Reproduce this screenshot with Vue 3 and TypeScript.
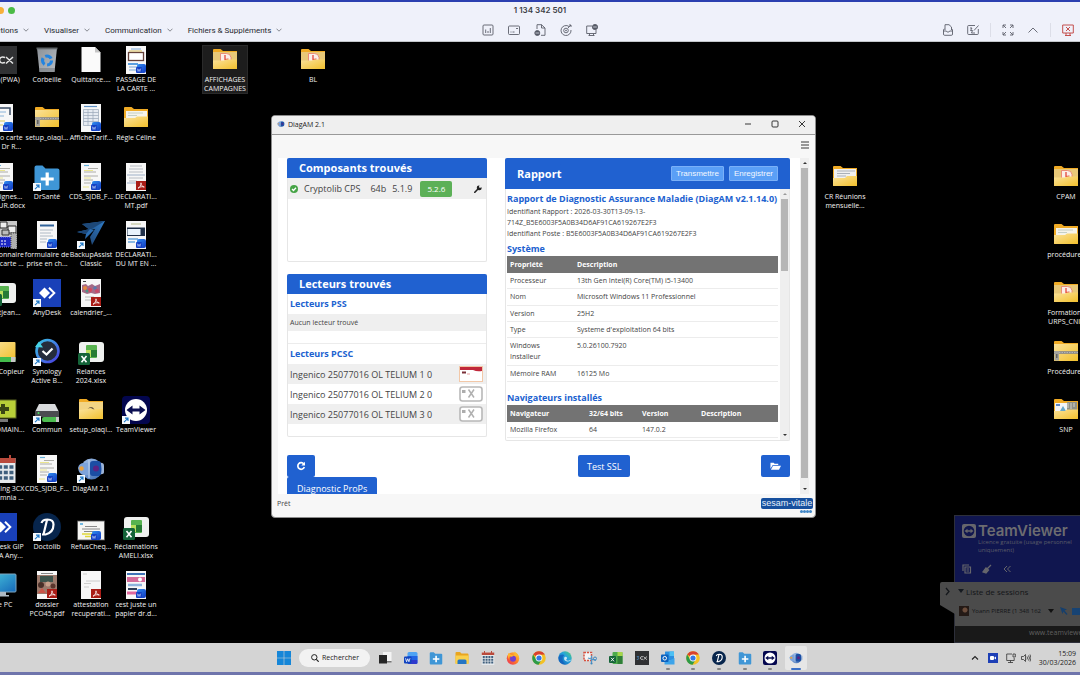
<script setup lang="ts">
interface DesktopItem {
  x: number
  y: number
  icon: string
  lines: string[]
  badge?: 'word' | 'pdf' | 'excel'
  shortcut?: boolean
  selected?: boolean
}

interface TaskIcon {
  icon: string
  name: string
  running?: boolean
  active?: boolean
}

const menus = ['Actions', 'Visualiser', 'Communication', 'Fichiers & Suppléments']

const items: DesktopItem[] = [
  { x: 3, y: 4, icon: 'cx', lines: ['3CX (PWA)'] },
  { x: 47, y: 4, icon: 'bin', lines: ['Corbeille'] },
  { x: 91, y: 4, icon: 'blank', lines: ['Quittance....'] },
  { x: 136, y: 4, icon: 'docframe', badge: 'word', lines: ['PASSAGE DE', 'LA CARTE ...'] },
  { x: 225, y: 4, icon: 'folderpdf', selected: true, lines: ['AFFICHAGES', 'CAMPAGNES'] },
  { x: 313, y: 4, icon: 'folderpdf', lines: ['BL'] },

  { x: 3, y: 62, icon: 'docside', badge: 'word', lines: ['Mémo carte', 'avec Dr R...'] },
  { x: 47, y: 62, icon: 'folderzip', lines: ['setup_olaqi...'] },
  { x: 91, y: 62, icon: 'doctable', badge: 'word', lines: ['AfficheTarif...'] },
  { x: 136, y: 62, icon: 'folderpaper', lines: ['Régie Céline'] },

  { x: 3, y: 121, icon: 'doctext', badge: 'word', lines: ['Consignes...', 'RETOUR.docx'] },
  { x: 47, y: 121, icon: 'sante', shortcut: true, lines: ['DrSanté'] },
  { x: 91, y: 121, icon: 'doctext', badge: 'word', lines: ['CDS_SJDB_F...'] },
  { x: 136, y: 121, icon: 'docform', badge: 'pdf', lines: ['DECLARATI...', 'MT.pdf'] },
  { x: 845, y: 121, icon: 'folderlines', lines: ['CR Réunions', 'mensuelle...'] },
  { x: 1066, y: 121, icon: 'folderpdf', lines: ['CPAM'] },

  { x: 3, y: 179, icon: 'cards', lines: ['Gestionnaire', 'de la carte ...'] },
  { x: 47, y: 179, icon: 'doclist', badge: 'word', lines: ['formulaire de', 'prise en ch...'] },
  { x: 91, y: 179, icon: 'backup', shortcut: true, lines: ['BackupAssist', 'Classic'] },
  { x: 136, y: 179, icon: 'docblue', badge: 'word', lines: ['DECLARATI...', 'DU MT EN ...'] },
  { x: 1066, y: 179, icon: 'folderpaper', lines: ['procédures'] },

  { x: 3, y: 237, icon: 'sheet', badge: 'excel', lines: ['CDStJean...'] },
  { x: 47, y: 237, icon: 'anydesk', shortcut: true, lines: ['AnyDesk'] },
  { x: 91, y: 237, icon: 'docphoto', badge: 'pdf', lines: ['calendrier_...'] },
  { x: 1066, y: 237, icon: 'folderpdf', lines: ['Formations', 'URPS_CNIL'] },

  { x: 3, y: 296, icon: 'netfolder', lines: ['Scan Copieur'] },
  { x: 47, y: 296, icon: 'synology', shortcut: true, lines: ['Synology', 'Active B...'] },
  { x: 91, y: 296, icon: 'sheet', badge: 'excel', lines: ['Relances', '2024.xlsx'] },
  { x: 1066, y: 296, icon: 'folderzip', lines: ['Procédures'] },

  { x: 3, y: 354, icon: 'greenscreen', lines: ['Dr ROMAIN...'] },
  { x: 47, y: 354, icon: 'drive', shortcut: true, lines: ['Commun'] },
  { x: 91, y: 354, icon: 'folderdoc', lines: ['setup_olaqi...'] },
  { x: 136, y: 354, icon: 'teamviewer', shortcut: true, lines: ['TeamViewer'] },
  { x: 1066, y: 354, icon: 'folderpics', lines: ['SNP'] },

  { x: 3, y: 413, icon: 'calendar', lines: ['Planning 3CX', 'de Lemnia ...'] },
  { x: 47, y: 413, icon: 'doctext', badge: 'word', lines: ['CDS_SJDB_F...'] },
  { x: 91, y: 413, icon: 'diagam', shortcut: true, lines: ['DiagAM 2.1'] },

  { x: 3, y: 471, icon: 'anydesk', lines: ['AnyDesk GIP', 'CDMA Any...'] },
  { x: 47, y: 471, icon: 'doctolib', shortcut: true, lines: ['Doctolib'] },
  { x: 91, y: 471, icon: 'docwide', badge: 'word', lines: ['RefusCheq...'] },
  { x: 136, y: 471, icon: 'sheet', badge: 'excel', lines: ['Réclamations', 'AMELI.xlsx'] },

  { x: 3, y: 529, icon: 'pc', lines: ['Ce PC'] },
  { x: 47, y: 529, icon: 'docclass', badge: 'pdf', lines: ['dossier', 'PCO45.pdf'] },
  { x: 91, y: 529, icon: 'docletter', badge: 'pdf', lines: ['attestation', 'recuperati...'] },
  { x: 136, y: 529, icon: 'docposter', badge: 'word', lines: ['cest juste un', 'papier dr.d...'] },
]

const readers = [
  { name: 'Ingenico 25077016 OL TELIUM 1 0', card: true },
  { name: 'Ingenico 25077016 OL TELIUM 2 0', card: false },
  { name: 'Ingenico 25077016 OL TELIUM 3 0', card: false },
]

const systemRows = [
  ['Processeur', '13th Gen Intel(R) Core(TM) i5-13400'],
  ['Nom', 'Microsoft Windows 11 Professionnel'],
  ['Version', '25H2'],
  ['Type', "Systeme d'exploitation 64 bits"],
  ['Windows Installeur', '5.0.26100.7920'],
  ['Mémoire RAM', '16125 Mo'],
]

const tasks: TaskIcon[] = [
  { icon: 'taskview', name: 'Vue des tâches' },
  { icon: 'word', name: 'Word' },
  { icon: 'sante', name: 'DrSanté' },
  { icon: 'explorer', name: 'Explorateur' },
  { icon: 'calendar', name: 'Planning' },
  { icon: 'firefox', name: 'Firefox' },
  { icon: 'chrome', name: 'Chrome' },
  { icon: 'edge', name: 'Edge' },
  { icon: 'snip', name: 'Capture' },
  { icon: 'excel', name: 'Excel' },
  { icon: 'cx', name: '3CX' },
  { icon: 'outlook', name: 'Outlook', running: true },
  { icon: 'chrome', name: 'Chrome 2', running: true },
  { icon: 'doctolib', name: 'Doctolib', running: true },
  { icon: 'sante', name: 'DrSanté 2', running: true },
  { icon: 'teamviewer', name: 'TeamViewer', running: true },
  { icon: 'diagam', name: 'DiagAM', active: true },
]
</script>

<template>
  <div class="screen">
    <svg class="defs" aria-hidden="true">
      <defs>
        <linearGradient id="gFolder" x1="0" y1="0" x2="1" y2="1">
          <stop offset="0" stop-color="#fbe29a" /><stop offset="1" stop-color="#f2c02c" />
        </linearGradient>
        <linearGradient id="gBin" x1="0" y1="0" x2="1" y2="1">
          <stop offset="0" stop-color="#8b9198" /><stop offset="1" stop-color="#b9bec3" />
        </linearGradient>
        <linearGradient id="gBackup" x1="0" y1="1" x2="1" y2="0">
          <stop offset="0" stop-color="#1c3c66" /><stop offset="1" stop-color="#2f7cc8" />
        </linearGradient>
        <linearGradient id="gRing" x1="0" y1="0" x2="1" y2="1">
          <stop offset="0" stop-color="#39c5e8" /><stop offset="1" stop-color="#4a3be0" />
        </linearGradient>
        <linearGradient id="gDiag" x1="0" y1="0" x2="1" y2="1">
          <stop offset="0" stop-color="#a9c4ea" /><stop offset="1" stop-color="#3567b0" />
        </linearGradient>
        <linearGradient id="gPc" x1="0" y1="0" x2="1" y2="1">
          <stop offset="0" stop-color="#47c3dc" /><stop offset="1" stop-color="#1668b8" />
        </linearGradient>
        <linearGradient id="gWord" x1="0" y1="0" x2="1" y2="1">
          <stop offset="0" stop-color="#2f8df0" /><stop offset="1" stop-color="#1238c0" />
        </linearGradient>
        <linearGradient id="gFire" x1="1" y1="0" x2="0" y2="1">
          <stop offset="0" stop-color="#ffd23a" /><stop offset="0.5" stop-color="#ff7a2a" /><stop offset="1" stop-color="#e8285c" />
        </linearGradient>
        <linearGradient id="gEdge" x1="0" y1="1" x2="1" y2="0">
          <stop offset="0" stop-color="#0c5ab8" /><stop offset="0.6" stop-color="#27a5dc" /><stop offset="1" stop-color="#54d06a" />
        </linearGradient>
        <symbol id="word-badge" viewBox="0 0 10 10">
          <rect x="1" y="0" width="9" height="9" rx="2" fill="url(#gWord)" />
          <rect y="3" width="6" height="6" rx="1" fill="#1440c4" />
          <path d="M1.2 4.5l.9 3 .9-2.400.9 2.400.9-3" fill="none" stroke="#dfe8ff" stroke-width=".5" />
        </symbol>
        <symbol id="pdf-badge" viewBox="0 0 10 10">
          <rect width="10" height="9" fill="#a91d17" />
          <path d="M2 7.2c2-.6 3-3.200 3-5.400c0 2.500 1.400 4 3.300 4.200c-2-.6-4.500-.3-6.300 1.200z" fill="none" stroke="#fff" stroke-width=".8" />
        </symbol>
        <symbol id="excel-badge" viewBox="0 0 12 12">
          <rect width="12" height="12" rx="1.500" fill="#146338" />
          <path d="M3.500 3l5 6.200M8.500 3l-5 6.200" stroke="#fff" stroke-width="1.600" />
        </symbol>
        <symbol id="link-badge" viewBox="0 0 8 8">
          <rect width="8" height="8" fill="#f5f9fd" />
          <path d="M2 6.200l3.600-3.600M3 2.100h3v3" fill="none" stroke="#1c78c8" stroke-width="1.100" />
        </symbol>
        <symbol id="page" viewBox="0 0 28 28"><path d="M4 0h20v28H4z" fill="#f7f7f7" /></symbol>
        <symbol id="folderback" viewBox="0 0 28 28">
          <path d="M2 4q0-1 1-1h6.500l2.500 2h14v18H2z" fill="#f0ab25" />
        </symbol>

        <symbol id="cx" viewBox="0 0 28 28">
          <rect width="28" height="28" fill="#303133" />
          <path d="M3.500 11h4l-2 3q2 .2 2 1.500q0 1.700-4 1.500" fill="none" stroke="#4d92cf" stroke-width="1.300" />
          <path d="M16 11.500q-5-1.500-5.500 2.500q.5 4 5.500 2.500M17 11l7 6.500M24 11l-7 6.500" fill="none" stroke="#e6e6e6" stroke-width="1.500" />
        </symbol>
        <symbol id="bin" viewBox="0 0 28 28">
          <path d="M4 2h20l-2.500 24h-15z" fill="url(#gBin)" /><path d="M3.500 1.500h21v1.800h-21z" fill="#5f6468" />
          <path d="M6 22h16l-.5 4h-15z" fill="#747a80" opacity=".6" />
          <circle cx="14" cy="14.500" r="4.500" fill="none" stroke="#2384e0" stroke-width="3.200" stroke-dasharray="6.800 2.600" />
        </symbol>
        <symbol id="blank" viewBox="0 0 28 28">
          <path d="M4.500 1h13.500l5.500 5.500V26h-19z" fill="#fafafa" /><path d="M18 1v5.500h5.500z" fill="#c5c5c5" />
        </symbol>
        <symbol id="docframe" viewBox="0 0 28 28">
          <use href="#page" /><path d="M9 3h10M7 21h10M7 24h8" stroke="#7aa7d8" /><rect x="6.500" y="6.500" width="15" height="8" fill="#fff" stroke="#64413a" stroke-width="1.300" /><path d="M6 18h10" stroke="#5ba0e0" stroke-width="2" /><path d="M7 5h13" stroke="#d9bd5a" />
        </symbol>
        <symbol id="docside" viewBox="0 0 28 28">
          <use href="#page" /><path d="M6 4h15v7" fill="none" stroke="#3a4c66" stroke-width="1.500" /><path d="M6 8h11M6 12h9" stroke="#8ab3d9" /><path d="M6 17h10M6 21h8" stroke="#d8c95b" />
        </symbol>
        <symbol id="doctable" viewBox="0 0 28 28">
          <use href="#page" /><path d="M7 2.500h13" stroke="#5c8fc4" stroke-width="1.200" /><path d="M6.500 5.500h15v16h-15zM6.500 8.500h15M6.500 11.500h15M6.500 14.500h15M6.500 17.500h15M11 5.500v16M16 5.500v16" fill="#e6ebf2" stroke="#98a6b8" stroke-width=".7" />
        </symbol>
        <symbol id="doctext" viewBox="0 0 28 28">
          <use href="#page" /><path d="M7 2.500h5" stroke="#65b1dc" stroke-width="1.200" /><path d="M11 5.500h10M7 9h12M7 13h14M7 17h9M7 20h7" stroke="#9a9a94" stroke-width=".8" /><path d="M7 7.500h9M7 15h7M6 24h6" stroke="#ebe58e" stroke-width="1.200" />
        </symbol>
        <symbol id="docform" viewBox="0 0 28 28">
          <use href="#page" /><path d="M8 3h12M7 6h14M7 9h14M7 15h14M7 18h8" stroke="#a8afb8" stroke-width=".8" /><path d="M5 12h18M5 20h9" stroke="#bcc8d8" stroke-width="1.600" />
        </symbol>
        <symbol id="doclist" viewBox="0 0 28 28">
          <use href="#page" /><path d="M7 4.500h14" stroke="#31639a" stroke-width="2" /><path d="M7 9h13M7 12h11M7 15h13M7 18h7M7 21h6" stroke="#9ca9b8" stroke-width=".8" />
        </symbol>
        <symbol id="docblue" viewBox="0 0 28 28">
          <use href="#page" /><path d="M9 3h10" stroke="#b5ba8a" /><rect x="5" y="6.500" width="18" height="8.500" fill="#203048" /><rect x="5.500" y="8" width="13" height="6" fill="#e8f2fb" /><path d="M6 18h10M6 21h7" stroke="#6aa7dc" stroke-width="1.400" />
        </symbol>
        <symbol id="docphoto" viewBox="0 0 28 28">
          <use href="#page" /><path d="M6 2.500h3" stroke="#444" />
          <path d="M5 6l4-1 2 2 4-2 3 2 5-2v9l-5 1-4-1-4 1-5-2z" fill="#a56a86" /><circle cx="8" cy="9" r="2" fill="#e4893f" /><circle cx="13" cy="11" r="2" fill="#d7465c" /><circle cx="18" cy="9" r="1.800" fill="#5b79ad" /><circle cx="20" cy="12" r="2" fill="#c74a6a" /><circle cx="10" cy="12" r="1.500" fill="#4f8f86" /><path d="M8 18h9M8 21h6" stroke="#b9b9b9" />
        </symbol>
        <symbol id="docwide" viewBox="0 0 28 28">
          <rect x=".5" y="8" width="27" height="19" fill="#f6f6f4" stroke="#555" stroke-width=".8" /><path d="M3 11h3" stroke="#4aa6dc" stroke-width="1.500" /><path d="M8 13.500h12M5 16h18M7 18.500h14" stroke="#6e6e6e" stroke-width=".8" /><path d="M5 21h13M8 23.500h9" stroke="#e0d73a" stroke-width="1.500" />
        </symbol>
        <symbol id="docclass" viewBox="0 0 28 28">
          <use href="#page" /><rect x="4" y="4" width="20" height="19" fill="#9c7a6c" /><rect x="7" y="5" width="13" height="6" fill="#3d544c" /><circle cx="8" cy="14" r="3" fill="#4a2f28" /><circle cx="15" cy="13" r="2.500" fill="#c9a18c" /><circle cx="20" cy="15" r="2.500" fill="#5a352c" /><path d="M5 22l4-5 4 5z" fill="#c95448" /><path d="M8 2.500h12" stroke="#888" />
        </symbol>
        <symbol id="docletter" viewBox="0 0 28 28">
          <use href="#page" /><path d="M6 3h4M9 10h14M7 12.500h7M7 16h5" stroke="#c1c1c1" stroke-width=".8" />
        </symbol>
        <symbol id="docposter" viewBox="0 0 28 28">
          <use href="#page" /><path d="M5 3h18" stroke="#3f73b8" stroke-width="2" /><rect x="5" y="6" width="18" height="5" fill="#d46b9a" /><path d="M6 14h14" stroke="#8db3dd" stroke-width="2.500" /><path d="M6 18h9" stroke="#2d3c58" stroke-width="2" /><path d="M5 22h10" stroke="#e0689e" stroke-width="3" /><circle cx="18" cy="8.500" r="2" fill="#fff" />
        </symbol>

        <symbol id="folderpaper" viewBox="0 0 28 28">
          <use href="#folderback" /><path d="M4 7h21v10H4z" fill="#f5f3ea" /><path d="M6 9h15M6 11.500h9" stroke="#b9c6bd" stroke-width=".8" /><path d="M2 14h11l2-1.500h11V22q0 1-1 1H3q-1 0-1-1z" fill="url(#gFolder)" />
        </symbol>
        <symbol id="folderlines" viewBox="0 0 28 28">
          <use href="#folderback" /><path d="M3 6h22v11H3z" fill="#f0f0f0" /><path d="M6 8h18M6 10.500h13M6 13h9" stroke="#aab0b8" stroke-width="1.200" /><path d="M2 15h12l2-2h10v9q0 1-1 1H3q-1 0-1-1z" fill="url(#gFolder)" />
        </symbol>
        <symbol id="folderpdf" viewBox="0 0 28 28">
          <use href="#folderback" /><path d="M2 6h24v16q0 1-1 1H3q-1 0-1-1z" fill="#e8c878" /><path d="M9.500 7.500h6q4 0 4.500 4v5H9.500z" fill="#fbeee8" stroke="#e9796a" stroke-width=".8" /><path d="M14 9v4.500l3.500-.5" fill="none" stroke="#e03a30" stroke-width="1.200" /><path d="M2 14.500h11l2-1h11V22q0 1-1 1H3q-1 0-1-1z" fill="url(#gFolder)" />
        </symbol>
        <symbol id="folderzip" viewBox="0 0 28 28">
          <use href="#folderback" /><path d="M2 6h24v16q0 1-1 1H3q-1 0-1-1z" fill="url(#gFolder)" /><path d="M2 14.500h24" stroke="#85858a" stroke-width="2.600" /><path d="M2 14.500h24" stroke="#c0c0c0" stroke-width=".8" stroke-dasharray="1.500 1" /><path d="M2.500 13h4.500v9.500H2.500z" fill="#a3a29c" /><path d="M4 16h1.500v4H4z" fill="#62625f" />
        </symbol>
        <symbol id="folderdoc" viewBox="0 0 28 28">
          <use href="#folderback" /><path d="M2 6h24v16q0 1-1 1H3q-1 0-1-1z" fill="#f2d484" /><path d="M2 14l10-1h14v9q0 1-1 1H3q-1 0-1-1z" fill="url(#gFolder)" /><path d="M10.500 13q4-4 7 .5l-2-.5q-2-2-5 0z" fill="#6b5a40" />
        </symbol>
        <symbol id="folderpics" viewBox="0 0 28 28">
          <use href="#folderback" /><path d="M3 7h12v8H3z" fill="#f3f5f7" /><path d="M4 9h4" stroke="#2a63b8" stroke-width="1.500" /><path d="M8 15l3-5 3 5z" fill="#67a7c9" /><path d="M15 6h10v8H15z" fill="#8e9188" /><path d="M16 7v5M19 7v6M22 7v4" stroke="#d5d2c8" /><path d="M2 15h11l2-1.500h11V22q0 1-1 1H3q-1 0-1-1z" fill="url(#gFolder)" />
        </symbol>
        <symbol id="sante" viewBox="0 0 28 28">
          <path d="M1.500 4.500q0-2 2-2h6l3 3h12q2 0 2 2V25q0 2-2 2h-21q-2 0-2-2z" fill="#3f96d6" /><path d="M14.200 9.500v13M7.700 16h13" stroke="#fff" stroke-width="3.200" />
        </symbol>
        <symbol id="cards" viewBox="0 0 28 28">
          <path d="M0 0h28v18H0z" fill="#c9c9c9" /><path d="M11 1h7v6h-7zM19 5h8v7h-8z" fill="#eee" stroke="#222" /><path d="M13 9h7v5h-7z" fill="#bbb" stroke="#333" /><path d="M2 16h20v10H2z" fill="#1a25c4" stroke="#8a90ff" stroke-dasharray="1 1" /><path d="M6 20h12M6 23h12" stroke="#fff" stroke-dasharray="2 1" /><path d="M22 12h6v16h-6z" fill="#b0b0b0" stroke="#444" stroke-dasharray="1 1" />
        </symbol>
        <symbol id="backup" viewBox="0 0 28 28">
          <path d="M5 3L28 0 15 24l-2-8 5-8-5 1z" fill="url(#gBackup)" />
          <path d="M5 3L28 0 13 9z" fill="#1d4878" />
          <path d="M0 11l13-3 4 1-9 9 1-5z" fill="#2a6db2" />
          <path d="M0 11l13-3-4 5z" fill="#1b4575" />
        </symbol>
        <symbol id="sheet" viewBox="0 0 28 28">
          <rect x="2" y="4" width="25" height="20" rx="3" fill="#eff1ef" /><rect x="9" y="7" width="11" height="13" rx="1" fill="#58b350" /><path d="M14 12h6v7h-6z" fill="#267b34" /><path d="M9 12h5v7H9z" fill="#b9df5c" />
        </symbol>
        <symbol id="anydesk" viewBox="0 0 28 28">
          <rect width="28" height="28" fill="#1940b8" /><path d="M11.500 8.500l5.500 5.500-5.500 5.500L6 14z" fill="#fff" /><path d="M16 8.700l5.300 5.300L16 19.300" fill="none" stroke="#fff" stroke-width="2" />
        </symbol>
        <symbol id="netfolder" viewBox="0 0 28 28">
          <rect x="2" y="4" width="24.500" height="18" rx="1" fill="url(#gFolder)" /><rect x="2" y="19" width="24.500" height="5" rx="1.500" fill="#43bb4b" /><rect x="22" y="19" width="4.500" height="5" fill="#c7c7c7" />
        </symbol>
        <symbol id="synology" viewBox="0 0 28 28">
          <circle cx="14.500" cy="13" r="11" fill="#252c3c" stroke="url(#gRing)" stroke-width="2.600" /><path d="M9.500 13l4 3.500 6-6" fill="none" stroke="#fff" stroke-width="2.200" /><path d="M2 9l8 .5-4-6z" fill="#47d3e4" />
        </symbol>
        <symbol id="greenscreen" viewBox="0 0 28 28">
          <rect x="1" y="4" width="26" height="18" fill="#b8cf38" stroke="#5a6420" /><path d="M14 8v10M9 13h11" stroke="#3a4614" stroke-width="4" /><path d="M10 23h9v3h-9z" fill="#777" />
        </symbol>
        <symbol id="drive" viewBox="0 0 28 28">
          <path d="M6 8h16l4 8H2z" fill="#d8dadc" /><path d="M2 15h24v6H2z" fill="#4b4d50" /><circle cx="5.500" cy="17" r="1" fill="#48df60" /><rect x="9" y="21" width="17" height="5" rx="2" fill="#4dbd50" /><rect x="23" y="21" width="3" height="5" fill="#c9c9c9" />
        </symbol>
        <symbol id="teamviewer" viewBox="0 0 28 28">
          <rect width="28" height="28" rx="4" fill="#03064e" /><circle cx="14" cy="14" r="11" fill="#fff" /><path d="M4.500 14l6-4.500V12.500h7V9.500l6 4.500-6 4.500v-3h-7v3z" fill="#0b0f52" />
        </symbol>
        <symbol id="calendar" viewBox="0 0 28 28">
          <rect x="1.500" y="3" width="25" height="25" fill="#e5e9ec" /><path d="M1.500 3h25v5h-25z" fill="#b94a3c" /><path d="M7 0v5M21 0v5" stroke="#b94a3c" stroke-width="2" /><path d="M3.500 12h21M3.500 17.500h21M3.500 23h21" stroke="#3f5f7d" stroke-width="3.600" stroke-dasharray="4 1.650" />
        </symbol>
        <symbol id="diagam" viewBox="0 0 28 28">
          <path d="M22 8q5-1 5 3v6q0 3-5 2z" fill="#9db4d6" /><circle cx="14.500" cy="14" r="10.500" fill="url(#gDiag)" /><path d="M1 13q1-5 6-5h4v12H7Q2 20 1 13z" fill="#7da3da" /><circle cx="4.500" cy="13.500" r="2.200" fill="#eda23c" /><rect x="13" y="6" width="11" height="15" rx="3" fill="#1b4ea4" /><circle cx="19" cy="13.500" r="3" fill="#5a2484" /><path d="M12 5v18" stroke="#c4d8f2" />
        </symbol>
        <symbol id="doctolib" viewBox="0 0 28 28">
          <circle cx="14" cy="14" r="14" fill="#07254c" /><path d="M14 7l-3.500 14.500M8.500 10q1-3.500 6-3.500 6 0 6 5 0 8-8 10H9" fill="none" stroke="#fff" stroke-width="2.200" />
        </symbol>
        <symbol id="pc" viewBox="0 0 28 28">
          <rect x="0" y="3" width="27" height="18" rx="1" fill="url(#gPc)" stroke="#7fa6bf" /><path d="M10 21h7v3h3v1.500H7V24h3z" fill="#aebac4" />
        </symbol>

        <symbol id="start" viewBox="0 0 14 14">
          <path d="M0 0h6.700v6.700H0zM7.300 0H14v6.700H7.300zM0 7.300h6.700V14H0zM7.300 7.300H14V14H7.300z" fill="#1586d8" />
        </symbol>
        <symbol id="taskview" viewBox="0 0 28 28">
          <rect x="10" y="2" width="17" height="18" fill="#f4f4f4" /><rect x="2" y="8" width="16" height="17" fill="#262626" /><path d="M18 20h9v3h-9z" fill="#777" />
        </symbol>
        <symbol id="word" viewBox="0 0 28 28">
          <rect x="7" y="2" width="20" height="24" rx="3" fill="#4ea3f4" /><path d="M7 10h20v8H7z" fill="#2164e4" /><path d="M7 18h20v5q0 3-3 3H10q-3 0-3-3z" fill="#2e39cc" /><rect y="11" width="15" height="14" rx="2" fill="#1144c0" /><path d="M3 14.500l2.200 7 2.300-6 2.300 6 2.200-7" fill="none" stroke="#fff" stroke-width="1.600" />
        </symbol>
        <symbol id="excel" viewBox="0 0 28 28">
          <rect x="7" y="2" width="20" height="24" rx="2" fill="#4cab4c" /><path d="M17 2h10v8H17z" fill="#a6d64a" /><path d="M17 10h10v16H17z" fill="#2f7f38" /><rect y="10" width="14" height="14" rx="2" fill="#146338" /><path d="M4 13.500l6 7M10 13.500l-6 7" stroke="#fff" stroke-width="1.800" />
        </symbol>
        <symbol id="explorer" viewBox="0 0 28 28">
          <path d="M1 4q0-2 2-2h7l3 3h12q2 0 2 2v18H1z" fill="#e9a51f" /><path d="M1 9h26v16q0 1-1 1H2q-1 0-1-1z" fill="#fad04c" /><path d="M5 20q0-3 3-3h12q3 0 3 3v6H5z" fill="#2475c4" />
        </symbol>
        <symbol id="firefox" viewBox="0 0 28 28">
          <circle cx="14" cy="15" r="12.500" fill="url(#gFire)" /><circle cx="14" cy="15.500" r="6" fill="#7240d0" /><path d="M5 4q5 4 11 5-4 4-8 1-3 3-1 8-5-6-2-14zM16 1q8 3 10 12-5-4-10-3 2-5 0-9z" fill="#ffb62e" />
        </symbol>
        <symbol id="chrome" viewBox="0 0 28 28">
          <circle cx="14" cy="14" r="13.500" fill="#f3c124" /><path d="M14 14L2.300 7.200A13.500 13.500 0 0 1 25.700 7.200L14 7.500z" fill="#d9402f" /><path d="M2.300 7.200A13.500 13.500 0 0 0 13.200 27.500L19 17.500 9 18z" fill="#2c9a48" /><circle cx="14" cy="14" r="6.800" fill="#fff" /><circle cx="14" cy="14" r="5.200" fill="#3578e5" />
        </symbol>
        <symbol id="edge" viewBox="0 0 28 28">
          <circle cx="14" cy="14" r="13.500" fill="url(#gEdge)" /><path d="M1 12q5-7 12-4-6 4-3 13 2 5 8 6Q1 28 1 12z" fill="#1462bd" opacity=".8" /><path d="M13 12q4-2 5 2 0 2-2 4 5 3 11-1-3 5-9 4-8-2-5-9z" fill="#e6f5fb" opacity=".85" />
        </symbol>
        <symbol id="snip" viewBox="0 0 28 28">
          <path d="M2 3h15v16H2z" fill="#f4f4f4" stroke="#d65240" stroke-width="3" stroke-dasharray="4 2" /><path d="M10 14l16 5M17 9v17" stroke="#5197c8" stroke-width="2.600" /><circle cx="24" cy="15" r="3" fill="none" stroke="#3b86c0" stroke-width="2" /><circle cx="17" cy="25" r="2" fill="#3b86c0" />
        </symbol>
        <symbol id="outlook" viewBox="0 0 28 28">
          <rect x="8" y="1" width="18" height="18" rx="1" fill="#2b8fe0" /><path d="M17 1h9v9h-9z" fill="#4cc0f4" /><path d="M7 14l10 5 10-5v13H7z" fill="#3da4ea" /><rect y="7" width="15" height="15" rx="2" fill="#0d62be" /><circle cx="7.500" cy="14.500" r="3.600" fill="none" stroke="#fff" stroke-width="1.900" />
        </symbol>
      </defs>
    </svg>

    <header class="viewer">
      <div class="title-row">
        <span class="lights"><i class="amber"></i><i class="green"></i></span>
        <h1>1 134 342 501</h1>
      </div>
      <div class="tool-row">
        <nav class="menus">
          <button v-for="m in menus" :key="m" type="button">
            {{ m }}<svg viewBox="0 0 6 4"><path d="M.5.700L3 3.200 5.500.700" /></svg>
          </button>
        </nav>
        <div class="tools">
          <button type="button" aria-label="Statistiques"><svg viewBox="0 0 12 12"><rect x="1" y="1" width="10" height="10" rx="1" /><path d="M3.700 9V5.500M6 9V7M8.300 9V4" /></svg></button>
          <button type="button" aria-label="Ligne de commande"><svg viewBox="0 0 12 12"><rect x=".5" y="2" width="11" height="8.500" rx="1" /><path d="M2.500 8h1M4.500 8h2M8 4.500h2" /></svg></button>
          <button type="button" aria-label="Fichier"><svg viewBox="0 0 12 12"><path d="M3 5V.700h4.500L11 4v7.300H7M7.500.700V4H11" /><circle cx="3.300" cy="9" r="2.500" fill="#555a66" /><path d="M1.500 9h3.600" stroke="#eff1fa" stroke-width=".7" /></svg></button>
          <button type="button" aria-label="Cible"><svg viewBox="0 0 12 12"><path d="M9 2.500A5 5 0 1 0 11 6M8 4l3-3M9 1h2v2" /><circle cx="6" cy="6.500" r="2.300" /><circle cx="6" cy="6.500" r=".5" /></svg></button>
          <button type="button" aria-label="Écran distant"><svg viewBox="0 0 12 12"><path d="M6 2H.700v7.500H10V6M3.500 9.500v2M7.500 9.500v2M2.500 11.500h6" /><circle cx="9" cy="3" r="2.600" fill="#555a66" /><path d="M7.200 3h3.600" stroke="#eff1fa" stroke-width=".7" /></svg></button>
        </div>
        <div class="actions">
          <button type="button" aria-label="Boîte"><svg viewBox="0 0 12 12"><path d="M3 6V.700h4L9.500 3v3M2.500 5q-1 0-1 1v4q0 1.300 1 1.300h7q1 0 1-1.300V6q0-1-1-1M1.500 7H4q2 2.500 4 0h2.500" /></svg></button>
          <button type="button" aria-label="Tableau blanc"><svg viewBox="0 0 12 12"><path d="M8 1.500H1.500q-.8 0-.8 1v7q0 1 .8 1h9q.8 0 .8-1V5M3 4h2L3.500 6.500h2L4.500 9H8M7 6.500l4.500-5" /></svg></button>
          <span class="sep"></span>
          <button type="button" aria-label="Plein écran"><svg viewBox="0 0 12 12"><path d="M1 4V1h3M1 1l3 3M8 1h3v3M11 1L8 4M1 8v3h3M1 11l3-3M11 8v3H8M11 11L8 8" /></svg></button>
          <button type="button" aria-label="Réduire la barre"><svg viewBox="0 0 12 12"><path d="M1.500 8.500L6 4l4.500 4.500" /></svg></button>
          <span class="sep"></span>
          <button type="button" class="close" aria-label="Terminer"><svg viewBox="0 0 12 12"><path d="M.700 1h10.600v8H.700zM4 3l4 4M8 3L4 7M4 9v2.500M8 9v2.500M3 11.500h6" /></svg></button>
        </div>
      </div>
    </header>

    <main class="desktop">
      <button
        v-for="(it, i) in items"
        :key="i"
        type="button"
        class="item"
        :class="{ selected: it.selected }"
        :style="{ left: it.x + 'px', top: it.y + 'px' }"
      >
        <svg class="pic" viewBox="0 0 28 28">
          <use :href="'#' + it.icon" width="28" height="28" />
          <use v-if="it.badge === 'word'" href="#word-badge" x="14" y="18" width="10" height="10" />
          <use v-if="it.badge === 'pdf'" href="#pdf-badge" x="14" y="18" width="10" height="10" />
          <use v-if="it.badge === 'excel'" href="#excel-badge" x="1" y="15" width="12" height="12" />
          <use v-if="it.shortcut" href="#link-badge" x="0" y="20" width="8" height="8" />
        </svg>
        <span class="label"><span v-for="l in it.lines" :key="l">{{ l }}</span></span>
      </button>

      <section class="window">
        <div class="titlebar">
          <svg class="app" viewBox="0 0 28 28"><use href="#diagam" /></svg>
          <span>DiagAM 2.1</span>
          <div class="winbtns">
            <button type="button" aria-label="Réduire"><svg viewBox="0 0 8 8"><path d="M1 4h6" /></svg></button>
            <button type="button" aria-label="Agrandir"><svg viewBox="0 0 8 8"><rect x="1" y="1" width="6" height="6" rx="1" /></svg></button>
            <button type="button" aria-label="Fermer"><svg viewBox="0 0 8 8"><path d="M1 1l6 6M7 1L1 7" /></svg></button>
          </div>
        </div>
        <div class="menubar">
          <button type="button" aria-label="Menu"><svg viewBox="0 0 8 8"><path d="M0 1h8M0 4h8M0 7h8" /></svg></button>
        </div>

        <div class="view">
          <div class="content">
            <div class="columns">
              <div class="left">
                <section class="panel">
                  <h2>Composants trouvés</h2>
                  <div class="comp">
                    <svg class="ok" viewBox="0 0 8 8"><circle cx="4" cy="4" r="4" fill="#47a447" /><path d="M2 4l1.500 1.500L6 2.800" fill="none" stroke="#fff" stroke-width="1.300" /></svg>
                    <span class="lib">Cryptolib CPS</span><span class="bits">64b</span><span class="ver">5.1.9</span>
                    <span class="tag">5.2.6</span>
                    <svg class="wrench" viewBox="0 0 8 8"><path d="M.8 7.200L4.500 3.500" stroke="#222" stroke-width="1.600" stroke-linecap="round" /><path d="M7.500 2.300A2.400 2.400 0 1 1 5.500.500L4.900 2l1 .9z" fill="#222" /></svg>
                  </div>
                </section>
                <section class="panel readers">
                  <h2>Lecteurs trouvés</h2>
                  <h3>Lecteurs PSS</h3>
                  <p class="none">Aucun lecteur trouvé</p>
                  <h3 class="second">Lecteurs PCSC</h3>
                  <ul>
                    <li v-for="r in readers" :key="r.name">
                      <span>{{ r.name }}</span>
                      <svg v-if="r.card" viewBox="0 0 24 16"><rect x=".5" y=".5" width="23" height="15" fill="#fff" stroke="#f2c8a8" /><path d="M1 1h22v4q-5 1-9-1H1z" fill="#c0273a" /><path d="M3 6.500h4" stroke="#7a3038" stroke-width="2" /><path d="M8 8h3" stroke="#e8a0a0" /></svg>
                      <svg v-else viewBox="0 0 24 16"><rect x="1" y="1" width="22" height="14" rx="2.500" fill="#fff" stroke="#b8b8b8" stroke-width="1.600" /><rect x="3" y="4" width="3.500" height="3" fill="#adadad" /><path d="M9.500 3.500l5.500 8M15 3.500l-5.500 8" stroke="#b0b0b0" stroke-width="1.500" /></svg>
                    </li>
                  </ul>
                </section>
              </div>

              <section class="panel report">
                <div class="report-head">
                  <h2>Rapport</h2>
                  <button type="button">Transmettre</button>
                  <button type="button">Enregistrer</button>
                </div>
                <div class="report-body">
                  <div class="doc">
                    <h3>Rapport de Diagnostic Assurance Maladie (DiagAM v2.1.14.0)</h3>
                    <p>Identifiant Rapport : 2026-03-30T13-09-13-<br />714Z_B5E6003F5A0B34D6AF91CA619267E2F3<br />Identifiant Poste : B5E6003F5A0B34D6AF91CA619267E2F3</p>
                    <h4>Système</h4>
                    <table class="sys">
                      <thead><tr><th>Propriété</th><th>Description</th></tr></thead>
                      <tbody>
                        <tr v-for="row in systemRows" :key="row[0]"><td>{{ row[0] }}</td><td>{{ row[1] }}</td></tr>
                      </tbody>
                    </table>
                    <h4 class="nav-title">Navigateurs installés</h4>
                    <table class="nav">
                      <thead><tr><th>Navigateur</th><th>32/64 bits</th><th>Version</th><th>Description</th></tr></thead>
                      <tbody><tr><td>Mozilla Firefox</td><td>64</td><td>147.0.2</td><td></td></tr></tbody>
                    </table>
                  </div>
                  <div class="scroll inner">
                    <svg viewBox="0 0 8 8"><path d="M2 5h4L4 3z" fill="#999" /></svg>
                    <i></i>
                    <svg viewBox="0 0 8 8"><path d="M2 3h4L4 5z" fill="#333" /></svg>
                  </div>
                </div>
              </section>
            </div>

            <div class="buttons">
              <div class="stack">
                <button type="button" class="primary" aria-label="Actualiser"><svg viewBox="0 0 10 10"><path d="M7.800 3A3.300 3.300 0 1 0 8.300 6" fill="none" stroke="#fff" stroke-width="1.700" /><path d="M9 .8v3.700H5.300z" fill="#fff" /></svg></button>
                <button type="button" class="primary wide">Diagnostic ProPs</button>
              </div>
              <button type="button" class="primary">Test SSL</button>
              <button type="button" class="primary open" aria-label="Ouvrir"><svg viewBox="0 0 12 10"><path d="M.5 8V1.500h3.500l1 1H9V4H3z" fill="#fff" /><path d="M3.300 4.700H12L9.800 9H1z" fill="#fff" /></svg></button>
            </div>
          </div>
          <div class="scroll">
            <svg viewBox="0 0 8 8"><path d="M2 5h4L4 3z" fill="#333" /></svg>
            <i></i>
            <svg viewBox="0 0 8 8"><path d="M2 3h4L4 5z" fill="#333" /></svg>
          </div>
        </div>

        <footer class="status">
          <span>Prêt</span>
          <div class="brand"><b>sesam-vitale</b><span class="dots"><i></i><i></i><i></i><i></i></span></div>
        </footer>
      </section>

      <aside class="tv">
        <svg class="handle" viewBox="0 0 15 32"><path d="M0 2q0-2 2-2h13v32L0 23z" fill="#4b4b4b" /><path d="M6 6l3 3.500L6 13" fill="none" stroke="#15181c" stroke-width="1.300" /></svg>
        <div class="tv-head">
          <div class="tv-brand">
            <svg viewBox="0 0 14 14"><rect width="14" height="14" rx="2" fill="#66666c" /><circle cx="7" cy="7" r="5.300" fill="#10164f" /><path d="M2.500 7l3-2.300v1.500h3V4.700l3 2.300-3 2.300V7.800h-3v1.500z" fill="#66666c" /></svg>
            <strong>TeamViewer</strong>
          </div>
          <p>Licence gratuite (usage personnel<br />uniquement)</p>
          <div class="tv-tools">
            <svg viewBox="0 0 10 10"><path d="M1 7V1h6M3 3h5.500v6H3zM4.500 5h2.500M4.500 7h2.500" fill="none" stroke="#66666c" stroke-width="1.200" /></svg>
            <svg viewBox="0 0 10 10"><path d="M1 8l3-4 2.500 2L4 9zM5.500 4.500L9 1" fill="#66666c" stroke="#66666c" stroke-width="1.300" /></svg>
            <svg viewBox="0 0 10 10"><path d="M5 2L2 5l3 3M8.500 2l-3 3 3 3" fill="none" stroke="#66666c" /></svg>
          </div>
        </div>
        <div class="tv-list">
          <div class="tv-title"><svg viewBox="0 0 6 6"><path d="M0 1h6L3 5z" fill="#151a20" /></svg>Liste de sessions</div>
          <div class="tv-user">
            <span class="face"></span><span>Yoann PIERRE (1 348 162</span>
            <svg viewBox="0 0 6 6"><path d="M0 1h6L3 5z" fill="#111" /></svg>
            <svg class="cursor" viewBox="0 0 8 8"><path d="M0 0l7 2.500-2.500 1L7.500 7l-1 1-3-3.500L2.500 7z" fill="#163f6c" /></svg>
            <span class="cam"></span>
          </div>
        </div>
        <div class="tv-foot">www.teamviewer.com</div>
      </aside>
    </main>

    <footer class="taskbar">
      <div class="apps">
        <button type="button" class="start" aria-label="Démarrer"><svg viewBox="0 0 14 14"><use href="#start" /></svg></button>
        <label class="search">
          <svg viewBox="0 0 8 8"><circle cx="3.300" cy="3.300" r="2.700" fill="none" stroke="#222" /><path d="M5.300 5.300l2.400 2.400" stroke="#222" stroke-width="1.200" /></svg>
          <input type="text" placeholder="Rechercher" aria-label="Rechercher" />
        </label>
        <div class="tasks">
          <button v-for="t in tasks" :key="t.name" type="button" :aria-label="t.name" :class="{ running: t.running, active: t.active }">
            <svg viewBox="0 0 28 28"><use :href="'#' + t.icon" /></svg>
          </button>
        </div>
      </div>
      <div class="tray">
        <svg viewBox="0 0 10 10"><path d="M2 6.500l3-3 3 3" fill="none" stroke="#222" stroke-width="1.100" /></svg>
        <svg viewBox="0 0 10 10"><rect width="10" height="10" fill="#1d3fb6" /><rect x="2" y="3" width="4" height="4" rx="1" fill="#fff" /><path d="M6 5l2-1.500v3z" fill="#fff" /></svg>
        <svg viewBox="0 0 10 10"><path d="M6 1H.700v6.500h7.500V5M2 9.500h5M4.500 7.500v2M7 1h2.300v3H7z" fill="none" stroke="#333" stroke-width=".8" /></svg>
        <svg class="sound" viewBox="0 0 10 10"><path d="M.5 3.500h2l2-2v7l-2-2h-2zM6 3.500q1 1.500 0 3M7.500 2.500q2 2.500 0 5M9 1.500q2 3.500 0 7" fill="none" stroke="#333" stroke-width=".8" /></svg>
        <div class="clock"><span>15:09</span><span>30/03/2026</span></div>
      </div>
    </footer>
  </div>
</template>

<style>
html,
body {
  margin: 0;
  background: #000;
}
</style>

<style scoped>
* {
  box-sizing: border-box;
}
.screen {
  min-height: 100vh;
  display: flex;
  flex-direction: column;
  overflow: hidden;
  font-family: "Open Sans", "Noto Sans", sans-serif;
  font-size: 8px;
  color: #444;
}
.defs {
  position: absolute;
  width: 0;
  height: 0;
}
button {
  font: inherit;
  color: inherit;
  border: 0;
  padding: 0;
  margin: 0;
  background: none;
}
h1, h2, h3, h4, p, ul {
  margin: 0;
  padding: 0;
}
svg {
  display: block;
  flex: none;
}

/* remote viewer toolbar */
.viewer {
  border-top: 2px solid #2b3fb0;
  border-bottom: 1px solid #c3c6cb;
  background: #eff1fa;
  font-family: Inter, "Liberation Sans", sans-serif;
  color: #3d3f46;
}
.title-row {
  height: 16px;
  display: grid;
  grid-template-columns: 1fr auto 1fr;
  align-items: center;
}
.title-row h1 {
  font-size: 8px;
  font-weight: 600;
  line-height: 16px;
}
.lights {
  display: flex;
  gap: 4px;
  margin-left: -3px;
}
.lights i {
  width: 7px;
  height: 7px;
  border-radius: 50%;
}
.amber {
  background: #f6b03a;
}
.green {
  background: #4bbb46;
}
.tool-row {
  height: 23px;
  display: grid;
  grid-template-columns: 1fr auto 1fr;
  align-items: center;
}
.menus {
  display: flex;
  gap: 15px;
  margin-left: -9px;
  padding-top: 1px;
}
.menus button {
  display: flex;
  align-items: center;
  gap: 5px;
  font-family: Roboto, "Liberation Sans", sans-serif;
  font-size: 8px;
  font-weight: 400;
  color: #26282e;
  white-space: nowrap;
}
.menus svg {
  width: 6px;
  height: 4px;
  fill: none;
  stroke: #6b6e76;
  stroke-width: 0.8;
}
.tools {
  display: flex;
  gap: 14px;
}
.tools svg,
.actions svg {
  width: 12px;
  height: 12px;
  fill: none;
  stroke: #5b5f6a;
  stroke-width: 0.9;
}
.actions {
  display: flex;
  justify-content: flex-end;
  align-items: center;
  gap: 13px;
  padding-right: 6px;
}
.actions .sep {
  width: 1px;
  height: 14px;
  margin: 0 -2px;
  background: #dcdee8;
}
.actions .close svg {
  stroke: #c0403c;
}

/* desktop */
.desktop {
  position: relative;
  flex: 1;
  min-height: 601px;
  overflow: hidden;
  background: #000;
}
.item {
  position: absolute;
  width: 44px;
  margin-left: -22px;
  display: flex;
  flex-direction: column;
  align-items: center;
  gap: 1px;
}
.item.selected {
  background: #1d1d1d;
  outline: 1px solid #2a2a2a;
}
.pic {
  width: 28px;
  height: 28px;
}
.label {
  display: flex;
  flex-direction: column;
  align-items: center;
  color: #f2f2f2;
  font-size: 7px;
  line-height: 9px;
  white-space: nowrap;
}

/* application window */
.window {
  position: absolute;
  left: 271px;
  top: 73px;
  width: 545px;
  border: 1px solid #8c8c8c;
  border-radius: 4px;
  overflow: hidden;
  background: #f7f7f7;
}
.titlebar {
  height: 19px;
  display: flex;
  align-items: center;
  gap: 3px;
  padding: 0 9px 2px 5px;
  background: #efefef;
  border-bottom: 1px solid #999;
  font-size: 7px;
  color: #222;
}
.titlebar .app {
  width: 8px;
  height: 8px;
}
.winbtns {
  margin-left: auto;
  display: flex;
  gap: 19px;
}
.winbtns svg,
.menubar svg {
  width: 8px;
  height: 8px;
  fill: none;
  stroke: #222;
  stroke-width: 0.9;
}
.menubar {
  height: 23px;
  display: flex;
  align-items: center;
  justify-content: flex-end;
  padding: 0 6px 4px;
}
.view {
  height: 336px;
  margin: 0 6px;
  display: flex;
  overflow: hidden;
  background: #fff;
}
.content {
  flex: 1;
  padding: 0 10px 0 9px;
}
.columns {
  display: flex;
  align-items: flex-start;
  gap: 18px;
}
.left {
  width: 200px;
  display: flex;
  flex-direction: column;
  gap: 12px;
}
.panel {
  height: 104px;
  border: 1px solid #e6e6e6;
  border-top: 0;
  border-radius: 2px;
  background: #fff;
}
.panel h2 {
  height: 20px;
  margin: 0 -1px;
  padding-left: 12px;
  border-radius: 2px 2px 0 0;
  background: #2061d0;
  color: #fff;
  font-size: 11px;
  line-height: 20px;
  font-weight: 700;
}
.comp {
  height: 21px;
  display: flex;
  align-items: center;
  background: #efefef;
  padding: 0 4px 0 2px;
  font-size: 9px;
}
.ok {
  width: 8px;
  height: 8px;
  margin-right: 6px;
}
.bits {
  margin-left: 10px;
}
.ver {
  margin-left: 6px;
}
.tag {
  width: 32px;
  height: 16px;
  margin-left: 8px;
  border-radius: 2px;
  background: #5cb057;
  color: #fff;
  font-size: 8px;
  line-height: 16px;
  text-align: center;
}
.wrench {
  width: 8px;
  height: 8px;
  margin-left: auto;
}
.readers {
  height: 163px;
}
h3,
h4 {
  color: #2061d0;
  font-size: 9px;
  font-weight: 700;
}
.readers h3 {
  padding-left: 2px;
  line-height: 20px;
}
.none {
  height: 17px;
  padding-left: 2px;
  background: #efefef;
  font-size: 7px;
  line-height: 17px;
}
.readers .second {
  margin-top: 12px;
  border-top: 1px solid #ececec;
  line-height: 20px;
}
.readers li {
  height: 20px;
  display: flex;
  align-items: center;
  justify-content: space-between;
  padding: 0 3px 0 2px;
  font-size: 9px;
}
.readers li:nth-child(odd) {
  background: #efefef;
}
.readers li svg {
  width: 24px;
  height: 16px;
}
.report {
  flex: 1;
  height: 283px;
}
.report-head {
  height: 31px;
  margin: 0 -1px;
  display: flex;
  align-items: center;
  gap: 5px;
  padding-right: 12px;
  background: #2061d0;
  border-radius: 2px 2px 0 0;
}
.report-head h2 {
  margin: 0 auto 0 0;
}
.report-head button {
  height: 15px;
  padding: 0 4px;
  border: 1px solid #7ab0f8;
  border-radius: 1px;
  background: #5a9ff6;
  color: #f4f8ff;
  font-family: "Liberation Sans", sans-serif;
  font-size: 8px;
}
.report-body {
  height: 251px;
  display: flex;
  overflow: hidden;
}
.doc {
  flex: 1;
  min-width: 0;
  padding: 3px 2px 0 1px;
}
.doc h3 {
  line-height: 14px;
  white-space: nowrap;
}
.doc p {
  font-size: 7px;
  line-height: 11px;
  white-space: nowrap;
}
.doc h4 {
  margin-top: 2px;
  line-height: 15px;
}
table {
  width: 100%;
  table-layout: fixed;
  border-collapse: collapse;
  font-size: 7px;
  line-height: 11px;
}
th {
  height: 17px;
  padding: 0 3px;
  background: #737373;
  color: #fff;
  text-align: left;
}
td {
  padding: 2px 3px;
  border-bottom: 1px solid #ececec;
  vertical-align: top;
}
.sys tr:nth-child(3n + 2) td {
  padding-bottom: 3px;
}
.sys th:first-child {
  width: 67px;
}
.doc .nav-title {
  margin-top: 8px;
}
.nav th:nth-child(1) {
  width: 79px;
}
.nav th:nth-child(2) {
  width: 53px;
}
.nav th:nth-child(3) {
  width: 59px;
}
.scroll {
  width: 9px;
  display: flex;
  flex-direction: column;
  align-items: center;
  background: #efefef;
}
.scroll svg {
  width: 8px;
  height: 10px;
}
.scroll i {
  width: 7px;
  height: 310px;
  background: #b6b6b6;
}
.scroll svg:last-child {
  margin-top: auto;
}
.inner i {
  height: 72px;
}
.buttons {
  display: flex;
  align-items: flex-start;
  margin-top: 14px;
}
.stack {
  width: 291px;
  display: flex;
  flex-direction: column;
  align-items: flex-start;
}
.primary {
  height: 22px;
  padding: 0 9px;
  border-radius: 2px;
  background: #2061d0;
  color: #fff;
  font-size: 9px;
}
.stack .primary svg {
  width: 10px;
  height: 10px;
}
.stack .wide {
  padding: 0 10px;
}
.open {
  margin-left: auto;
}
.open svg {
  width: 11px;
  height: 10px;
}
.status {
  height: 23px;
  display: flex;
  justify-content: space-between;
  padding: 4px 2px 0 5px;
  font-size: 7px;
  line-height: 12px;
}
.brand {
  width: 52px;
}
.brand b {
  display: block;
  height: 11px;
  border-radius: 2px;
  background: #17509e;
  color: #e8f0fa;
  font-family: "Liberation Sans", sans-serif;
  font-size: 9px;
  font-weight: 400;
  line-height: 10px;
  text-align: center;
  white-space: nowrap;
}
.dots {
  display: flex;
  justify-content: flex-end;
  padding-top: 1px;
  padding-right: 1px;
}
.dots i {
  width: 3px;
  height: 3px;
  border-radius: 50%;
  background: #4288c8;
}

/* session panel */
.tv {
  position: absolute;
  right: 0;
  bottom: 0;
  width: 126px;
  border: 1px solid #2d2f3a;
  border-right: 0;
  color: #5a5b68;
  font-size: 6px;
}
.handle {
  position: absolute;
  left: -15px;
  top: 66px;
  width: 15px;
  height: 32px;
}
.tv-head {
  height: 66px;
  padding: 8px 0 0 7px;
  overflow: hidden;
  background: #10164f;
}
.tv-brand {
  display: flex;
  align-items: center;
  gap: 2px;
  height: 14px;
}
.tv-brand svg {
  width: 14px;
  height: 14px;
}
.tv-brand strong {
  color: #6c6c70;
  font-family: Inter, sans-serif;
  font-size: 15px;
  font-weight: 600;
  line-height: 14px;
}
.tv-head p {
  padding-left: 16px;
  line-height: 8px;
  white-space: nowrap;
}
.tv-tools {
  display: flex;
  gap: 10px;
  padding-top: 10px;
}
.tv-tools svg {
  width: 10px;
  height: 10px;
}
.tv-list {
  height: 44px;
  background: #4b4b4b;
  color: #131518;
}
.tv-title {
  height: 18px;
  display: flex;
  align-items: center;
  gap: 2px;
  padding-left: 3px;
  font-size: 8px;
}
.tv-list svg {
  width: 6px;
  height: 6px;
}
.tv-user {
  height: 22px;
  display: flex;
  align-items: center;
  gap: 3px;
  padding-left: 4px;
  font-size: 6px;
  white-space: nowrap;
}
.face {
  width: 10px;
  height: 10px;
  flex: none;
  background: radial-gradient(circle at 6px 4px, #6b4d3c 2px, #241a16 3px);
}
.tv-user svg {
  margin-left: 4px;
}
.tv-user .cursor {
  width: 8px;
  height: 8px;
  margin-left: 3px;
}
.cam {
  width: 8px;
  height: 7px;
  flex: none;
  margin-left: 1px;
  background: #174373;
}
.tv-foot {
  height: 16px;
  padding-left: 74px;
  background: #191919;
  color: #606060;
  font-size: 7px;
  line-height: 14px;
  white-space: nowrap;
  overflow: hidden;
}

/* taskbar */
.taskbar {
  height: 32px;
  display: grid;
  grid-template-columns: 1fr auto 1fr;
  align-items: center;
  padding-left: 6px;
  background: #d4d4d4;
  border-bottom: 3px solid #6f75ac;
}
.apps {
  grid-column: 2;
  display: flex;
  align-items: center;
}
.start svg {
  width: 14px;
  height: 14px;
}
.search {
  width: 71px;
  height: 18px;
  margin: 0 2px 0 8px;
  padding-left: 12px;
  display: flex;
  align-items: center;
  gap: 3px;
  border-radius: 9px;
  background: #f2f2f2;
}
.search svg {
  width: 8px;
  height: 8px;
}
.search input {
  width: 44px;
  border: 0;
  padding: 0;
  background: none;
  font: inherit;
  font-size: 7px;
}
.search input::placeholder {
  color: #222;
  opacity: 1;
}
.tasks {
  width: 437px;
  display: grid;
  grid-template-columns: repeat(17, 1fr);
  justify-items: center;
}
.tasks button {
  position: relative;
  width: 22px;
  height: 24px;
  display: flex;
  align-items: center;
  justify-content: center;
  border-radius: 2px;
}
.tasks svg {
  width: 14px;
  height: 14px;
}
.tasks .running::after,
.tasks .active::after {
  content: "";
  position: absolute;
  left: 9px;
  bottom: 0;
  width: 4px;
  height: 2px;
  border-radius: 1px;
  background: #858585;
}
.tasks .active {
  background: #e6e6e6;
}
.tasks .active::after {
  left: 6px;
  width: 10px;
  background: #3a70c8;
}
.tray {
  display: flex;
  justify-content: flex-end;
  align-items: center;
  gap: 8px;
  padding-right: 4px;
}
.tray svg {
  width: 10px;
  height: 10px;
}
.tray .sound {
  margin-left: -3px;
}
.clock {
  display: flex;
  flex-direction: column;
  align-items: flex-end;
  color: #222;
  font-size: 7px;
  line-height: 9px;
}
</style>
